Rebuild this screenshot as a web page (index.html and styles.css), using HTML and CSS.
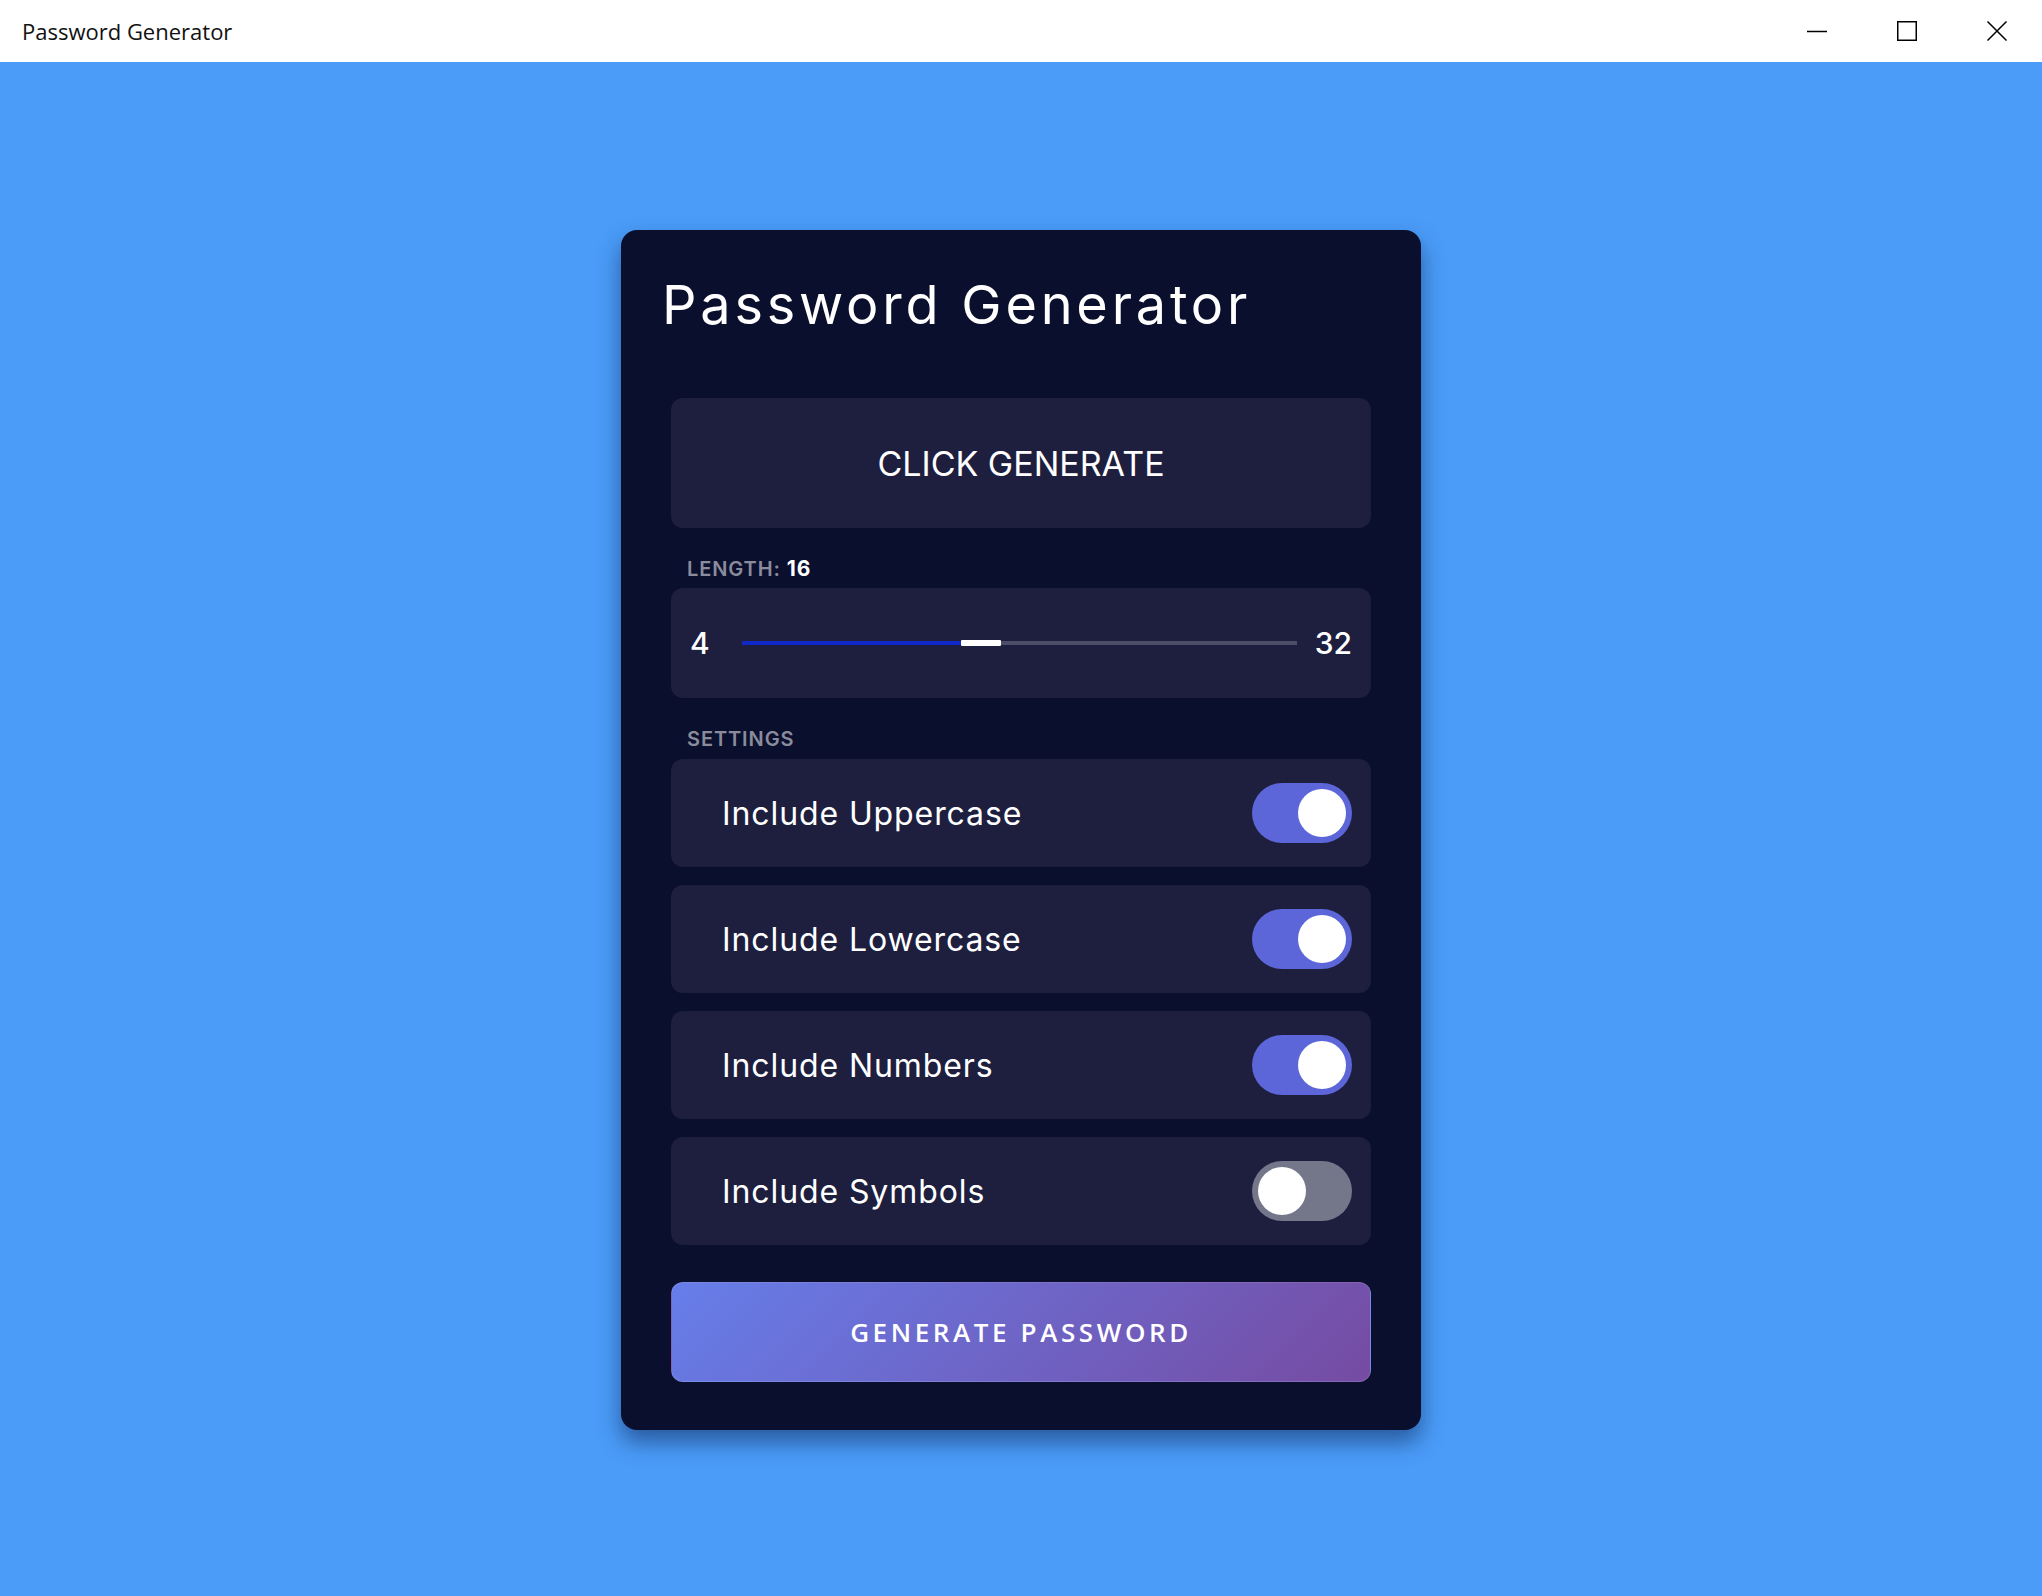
FILE: index.html
```html
<!DOCTYPE html>
<html lang="en">
<head>
<meta charset="utf-8">
<title>Password Generator</title>
<link rel="stylesheet" href="styles.css">
</head>
<body>
<header class="titlebar">
  <span class="app-title">Password Generator</span>
  <div class="win-controls">
    <div class="win-btn">
      <svg width="20" height="20" viewBox="0 0 20 20"><path d="M0 10.5H20" stroke="#000" stroke-width="1.5" fill="none"/></svg>
    </div>
    <div class="win-btn">
      <svg width="20" height="20" viewBox="0 0 20 20"><rect x="0.75" y="0.75" width="18.5" height="18.5" stroke="#000" stroke-width="1.5" fill="none"/></svg>
    </div>
    <div class="win-btn">
      <svg width="20" height="20" viewBox="0 0 20 20"><path d="M0.5 0.5L19.5 19.5M19.5 0.5L0.5 19.5" stroke="#000" stroke-width="1.5" fill="none"/></svg>
    </div>
  </div>
</header>
<main class="stage">
  <section class="card">
    <h1 class="card-title">Password Generator</h1>
    <div class="output">CLICK GENERATE</div>
    <div class="label">Length: <span class="label-value">16</span></div>
    <div class="slider-box">
      <span class="num">4</span>
      <div class="track">
        <div class="fill" style="width: 39.6%"></div>
        <div class="thumb"></div>
        <div class="rest"></div>
      </div>
      <span class="num">32</span>
    </div>
    <div class="label">Settings</div>
    <div class="toggles">
      <div class="row"><span>Include Uppercase</span><div class="switch"><div class="knob"></div></div></div>
      <div class="row"><span>Include Lowercase</span><div class="switch"><div class="knob"></div></div></div>
      <div class="row"><span>Include Numbers</span><div class="switch"><div class="knob"></div></div></div>
      <div class="row"><span>Include Symbols</span><div class="switch off"><div class="knob"></div></div></div>
    </div>
    <button class="generate">GENERATE PASSWORD</button>
  </section>
</main>
</body>
</html>
```
FILE: styles.css
```css
* { box-sizing: border-box; }
html, body { margin: 0; height: 100%; }
body {
  background: #4a9cf8;
  font-family: Inter, "Noto Sans", sans-serif;
  overflow: hidden;
}
.titlebar {
  height: 62px;
  background: #fff;
  display: flex;
  align-items: center;
  padding-left: 22px;
}
.app-title {
  font-family: "Open Sans", "Noto Sans", sans-serif;
  font-size: 22px;
  color: #111;
  flex: 1;
}
.win-controls { display: flex; height: 100%; }
.win-btn {
  width: 90px;
  display: flex;
  align-items: center;
  justify-content: center;
}
.stage {
  height: calc(100% - 62px);
  padding-top: 2px;
  display: flex;
  align-items: center;
  justify-content: center;
}
.card {
  width: 800px;
  background: #0b0f2e;
  border-radius: 16px;
  padding: 43px 50px 48px;
  box-shadow: 0 12px 22px rgba(10, 25, 70, 0.5);
  color: #fff;
}
.card-title {
  font-size: 54px;
  font-weight: 400;
  line-height: 64px;
  letter-spacing: 3.8px;
  margin: 0 0 61px -9px;
}
.output {
  height: 130px;
  background: #1e1f3f;
  border-radius: 12px;
  display: flex;
  align-items: center;
  justify-content: center;
  font-size: 34px;
}
.label {
  margin: 31px 0 9px;
  padding-left: 16px;
  font-size: 20px;
  line-height: 20px;
  font-weight: 600;
  letter-spacing: 0.9px;
  color: #8a8c9c;
  text-transform: uppercase;
}
.label-value { color: #fff; font-weight: 700; font-size: 21px; }
.slider-box {
  height: 110px;
  background: #1e1f3f;
  border-radius: 12px;
  padding: 0 19px;
  display: flex;
  align-items: center;
}
.num { font-size: 30px; font-weight: 500; }
.track {
  flex: 1;
  height: 4px;
  margin: 0 18px 0 32px;
  display: flex;
  align-items: center;
}
.fill { height: 4px; background: #1028c6; }
.thumb { width: 40px; height: 6px; background: #fff; border-radius: 1px; }
.rest { flex: 1; height: 4px; background: #4c4e68; }
.label + .toggles { margin-top: 10px; }
.toggles {
  display: flex;
  flex-direction: column;
  gap: 18px;
}
.row {
  height: 108px;
  background: #1e1f3f;
  border-radius: 12px;
  padding: 0 19px 0 51px;
  display: flex;
  align-items: center;
  justify-content: space-between;
  font-size: 32px;
  letter-spacing: 0.9px;
}
.switch {
  width: 100px;
  height: 60px;
  border-radius: 30px;
  background: #5c66d8;
  padding: 6px;
  display: flex;
  justify-content: flex-end;
}
.switch.off { background: #74778a; justify-content: flex-start; }
.knob { width: 48px; height: 48px; border-radius: 50%; background: #fff; }
.generate {
  display: block;
  width: 100%;
  height: 100px;
  margin-top: 37px;
  border: 1px solid rgba(255, 255, 255, 0.12);
  border-radius: 12px;
  background: linear-gradient(135deg, #667eea 0%, #764ba2 100%);
  color: #fff;
  font-family: "Open Sans", "Noto Sans", sans-serif;
  font-weight: 600;
  font-size: 26px;
  letter-spacing: 3.6px;
}
```
